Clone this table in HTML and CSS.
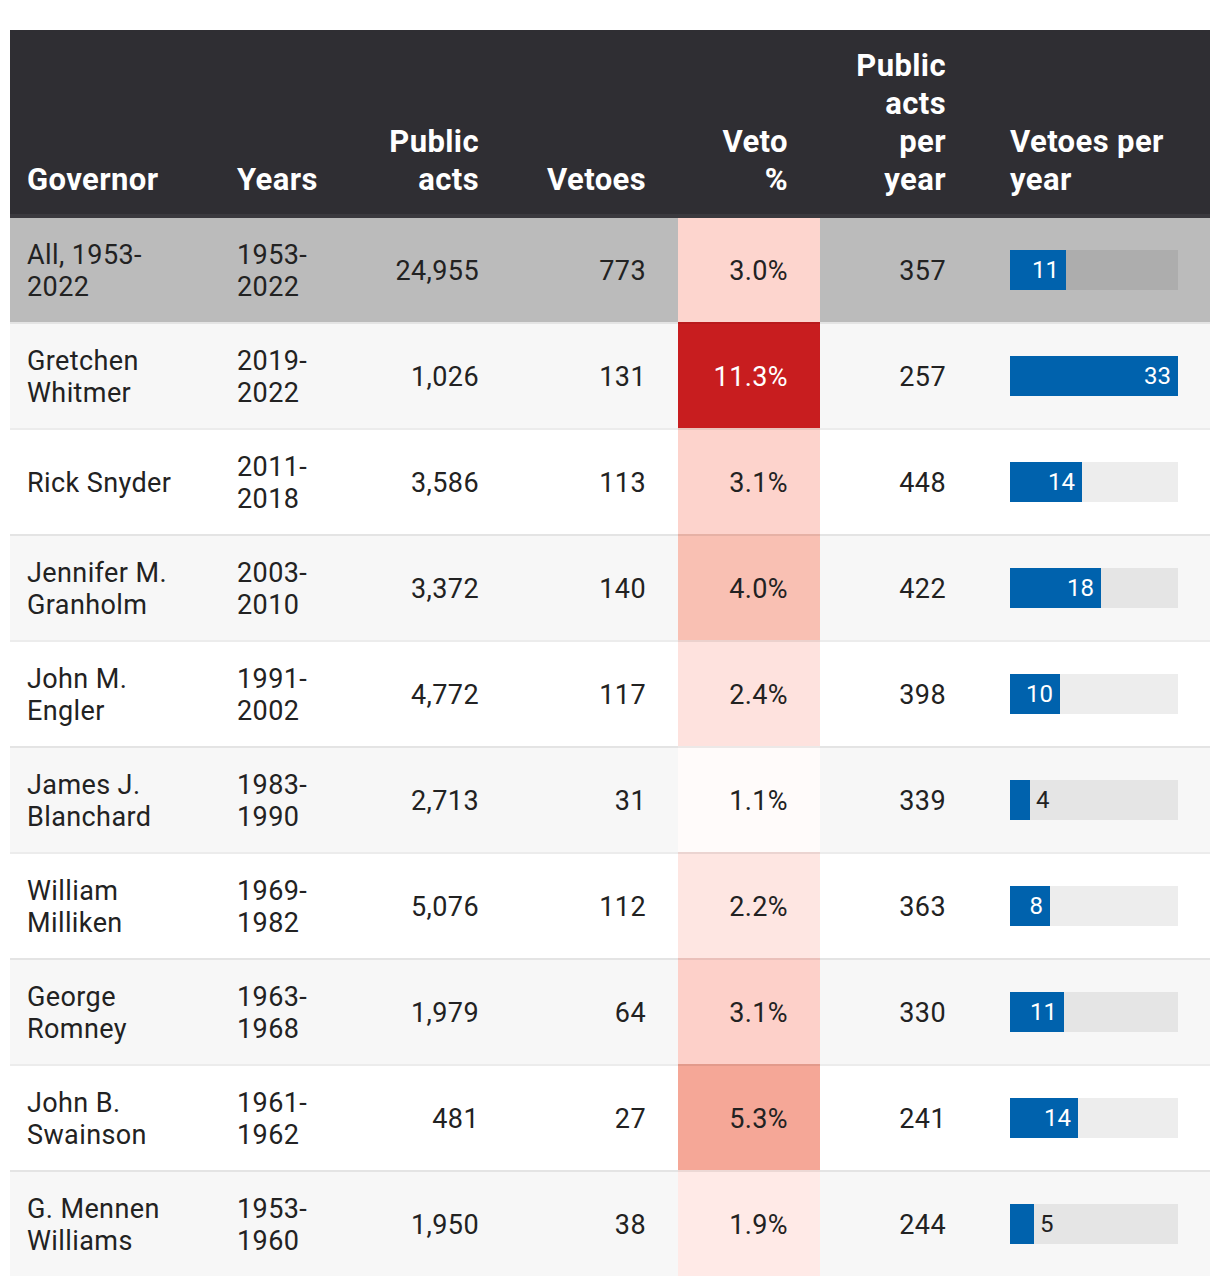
FILE: index.html
```html
<!DOCTYPE html>
<html lang="en">
<head>
<meta charset="utf-8">
<title>Michigan governors: public acts and vetoes</title>
<link rel="stylesheet" href="styles.css">
</head>
<body>
<div class="wrap">
<table class="vt">
  <colgroup>
    <col class="c-gov"><col class="c-yrs"><col class="c-acts"><col class="c-vet"><col class="c-pct"><col class="c-apy"><col class="c-vpy">
  </colgroup>
  <thead>
    <tr>
      <th class="l">Governor</th>
      <th class="l">Years</th>
      <th class="r">Public<br>acts</th>
      <th class="r vetc">Vetoes</th>
      <th class="r pctc">Veto<br>%</th>
      <th class="r">Public<br>acts<br>per<br>year</th>
      <th class="l vpyc">Vetoes per<br>year</th>
    </tr>
  </thead>
  <tbody>
    <tr class="total">
      <td>All, 1953-<br>2022</td><td>1953-<br>2022</td><td class="r">24,955</td><td class="r vetc">773</td>
      <td class="r pct p30">3.0%</td><td class="r">357</td>
      <td class="vpyc"><div class="track"><div class="fill" style="width:56px"><span class="in">11</span></div></div></td>
    </tr>
    <tr class="alt">
      <td>Gretchen<br>Whitmer</td><td>2019-<br>2022</td><td class="r">1,026</td><td class="r vetc">131</td>
      <td class="r pct p113">11.3%</td><td class="r">257</td>
      <td class="vpyc"><div class="track"><div class="fill" style="width:168px"><span class="in">33</span></div></div></td>
    </tr>
    <tr>
      <td>Rick Snyder</td><td>2011-<br>2018</td><td class="r">3,586</td><td class="r vetc">113</td>
      <td class="r pct p31">3.1%</td><td class="r">448</td>
      <td class="vpyc"><div class="track"><div class="fill" style="width:72px"><span class="in">14</span></div></div></td>
    </tr>
    <tr class="alt">
      <td>Jennifer M.<br>Granholm</td><td>2003-<br>2010</td><td class="r">3,372</td><td class="r vetc">140</td>
      <td class="r pct p40">4.0%</td><td class="r">422</td>
      <td class="vpyc"><div class="track"><div class="fill" style="width:91px"><span class="in">18</span></div></div></td>
    </tr>
    <tr>
      <td>John M.<br>Engler</td><td>1991-<br>2002</td><td class="r">4,772</td><td class="r vetc">117</td>
      <td class="r pct p24">2.4%</td><td class="r">398</td>
      <td class="vpyc"><div class="track"><div class="fill" style="width:50px"><span class="in">10</span></div></div></td>
    </tr>
    <tr class="alt">
      <td>James J.<br>Blanchard</td><td>1983-<br>1990</td><td class="r">2,713</td><td class="r vetc">31</td>
      <td class="r pct p11">1.1%</td><td class="r">339</td>
      <td class="vpyc"><div class="track"><div class="fill" style="width:20px"></div><span class="out">4</span></div></td>
    </tr>
    <tr>
      <td>William<br>Milliken</td><td>1969-<br>1982</td><td class="r">5,076</td><td class="r vetc">112</td>
      <td class="r pct p22">2.2%</td><td class="r">363</td>
      <td class="vpyc"><div class="track"><div class="fill" style="width:40px"><span class="in">8</span></div></div></td>
    </tr>
    <tr class="alt">
      <td>George<br>Romney</td><td>1963-<br>1968</td><td class="r">1,979</td><td class="r vetc">64</td>
      <td class="r pct p31">3.1%</td><td class="r">330</td>
      <td class="vpyc"><div class="track"><div class="fill" style="width:54px"><span class="in">11</span></div></div></td>
    </tr>
    <tr>
      <td>John B.<br>Swainson</td><td>1961-<br>1962</td><td class="r">481</td><td class="r vetc">27</td>
      <td class="r pct p53">5.3%</td><td class="r">241</td>
      <td class="vpyc"><div class="track"><div class="fill" style="width:68px"><span class="in">14</span></div></div></td>
    </tr>
    <tr class="alt">
      <td>G. Mennen<br>Williams</td><td>1953-<br>1960</td><td class="r">1,950</td><td class="r vetc">38</td>
      <td class="r pct p19">1.9%</td><td class="r">244</td>
      <td class="vpyc"><div class="track"><div class="fill" style="width:24px"></div><span class="out">5</span></div></td>
    </tr>
  </tbody>
</table>
</div>
</body>
</html>
```
FILE: styles.css
```css
html, body {
  margin: 0;
  padding: 0;
  background: #ffffff;
}
body {
  font-family: Roboto, "Liberation Sans", Arial, sans-serif;
  color: #222222;
}
.wrap {
  padding: 30px 10px 0 10px;
}
.vt {
  width: 1200px;
  table-layout: fixed;
  border-collapse: separate;
  border-spacing: 0;
}
.c-gov { width: 210px; }
.c-yrs { width: 141px; }
.c-acts { width: 134px; }
.c-vet { width: 183px; }
.c-pct { width: 142px; }
.c-apy { width: 142px; }
.c-vpy { width: 248px; }

.vt th {
  background: #2f2e33;
  color: #ffffff;
  font-size: 31px;
  font-weight: 700;
  letter-spacing: 0.4px;
  line-height: 38px;
  padding: 17px 17px 15px 17px;
  vertical-align: bottom;
  border-bottom: 4px solid #3a393e;
}
.vt th.l { text-align: left; }
.vt th.r { text-align: right; padding-right: 16px; }
.vt th.vetc, .vt td.vetc { padding-right: 32px; }
.vt th.pctc, .vt td.pct { padding-right: 32px; }
.vt th.vpyc, .vt td.vpyc { padding-left: 48px; padding-right: 32px; }

.vt td {
  font-size: 27px;
  letter-spacing: 0.4px;
  line-height: 32px;
  padding: 3px 17px 0 17px;
  height: 103px;
  vertical-align: middle;
  box-sizing: content-box;
  background: #ffffff;
  box-shadow: inset 0 2px 0 rgba(0, 0, 0, 0.075);
}
.vt td.r { text-align: right; padding-right: 16px; }
.vt td.r.vetc { padding-right: 32px; }
.vt td.r.pct { padding-right: 32px; }
.vt tr.alt td { background: #f7f7f7; }
.vt tr.total td {
  background: #bbbbbb;
  box-shadow: none;
  padding-top: 1px;
}
.vt td.vpyc { padding-top: 2px; height: 104px; }
.vt tr.total td.vpyc { padding-top: 0; }

.vt td.p30 { background: #fdd5ce; }
.vt td.p113 { background: #c81d1f; color: #ffffff; }
.vt td.p31 { background: #fdd3cc; }
.vt td.p40 { background: #f9c0b3; }
.vt td.p24 { background: #fee2de; }
.vt td.p11 { background: #fffbfa; }
.vt td.p22 { background: #fee6e2; }
.vt td.p53 { background: #f5a797; }
.vt td.p19 { background: #ffeae7; }
.vt tr.alt td.p30, .vt tr.total td.p30 { background: #fdd5ce; }
.vt tr.alt td.p113 { background: #c81d1f; }
.vt tr.alt td.p31 { background: #fdd0c9; }
.vt tr.alt td.p40 { background: #f9c0b3; }
.vt tr.alt td.p11 { background: #fffbfa; }
.vt tr.alt td.p19 { background: #ffeae7; }

.track {
  display: flex;
  align-items: stretch;
  width: 168px;
  height: 40px;
  background: rgba(0, 0, 0, 0.07);
  letter-spacing: 0;
}
.fill {
  background: #0062ad;
  display: flex;
  align-items: center;
  justify-content: flex-end;
  flex: none;
}
.in {
  color: #ffffff;
  font-size: 24px;
  line-height: 40px;
  padding-right: 7px;
}
.out {
  color: #222222;
  font-size: 24px;
  line-height: 40px;
  padding-left: 6px;
}
```
